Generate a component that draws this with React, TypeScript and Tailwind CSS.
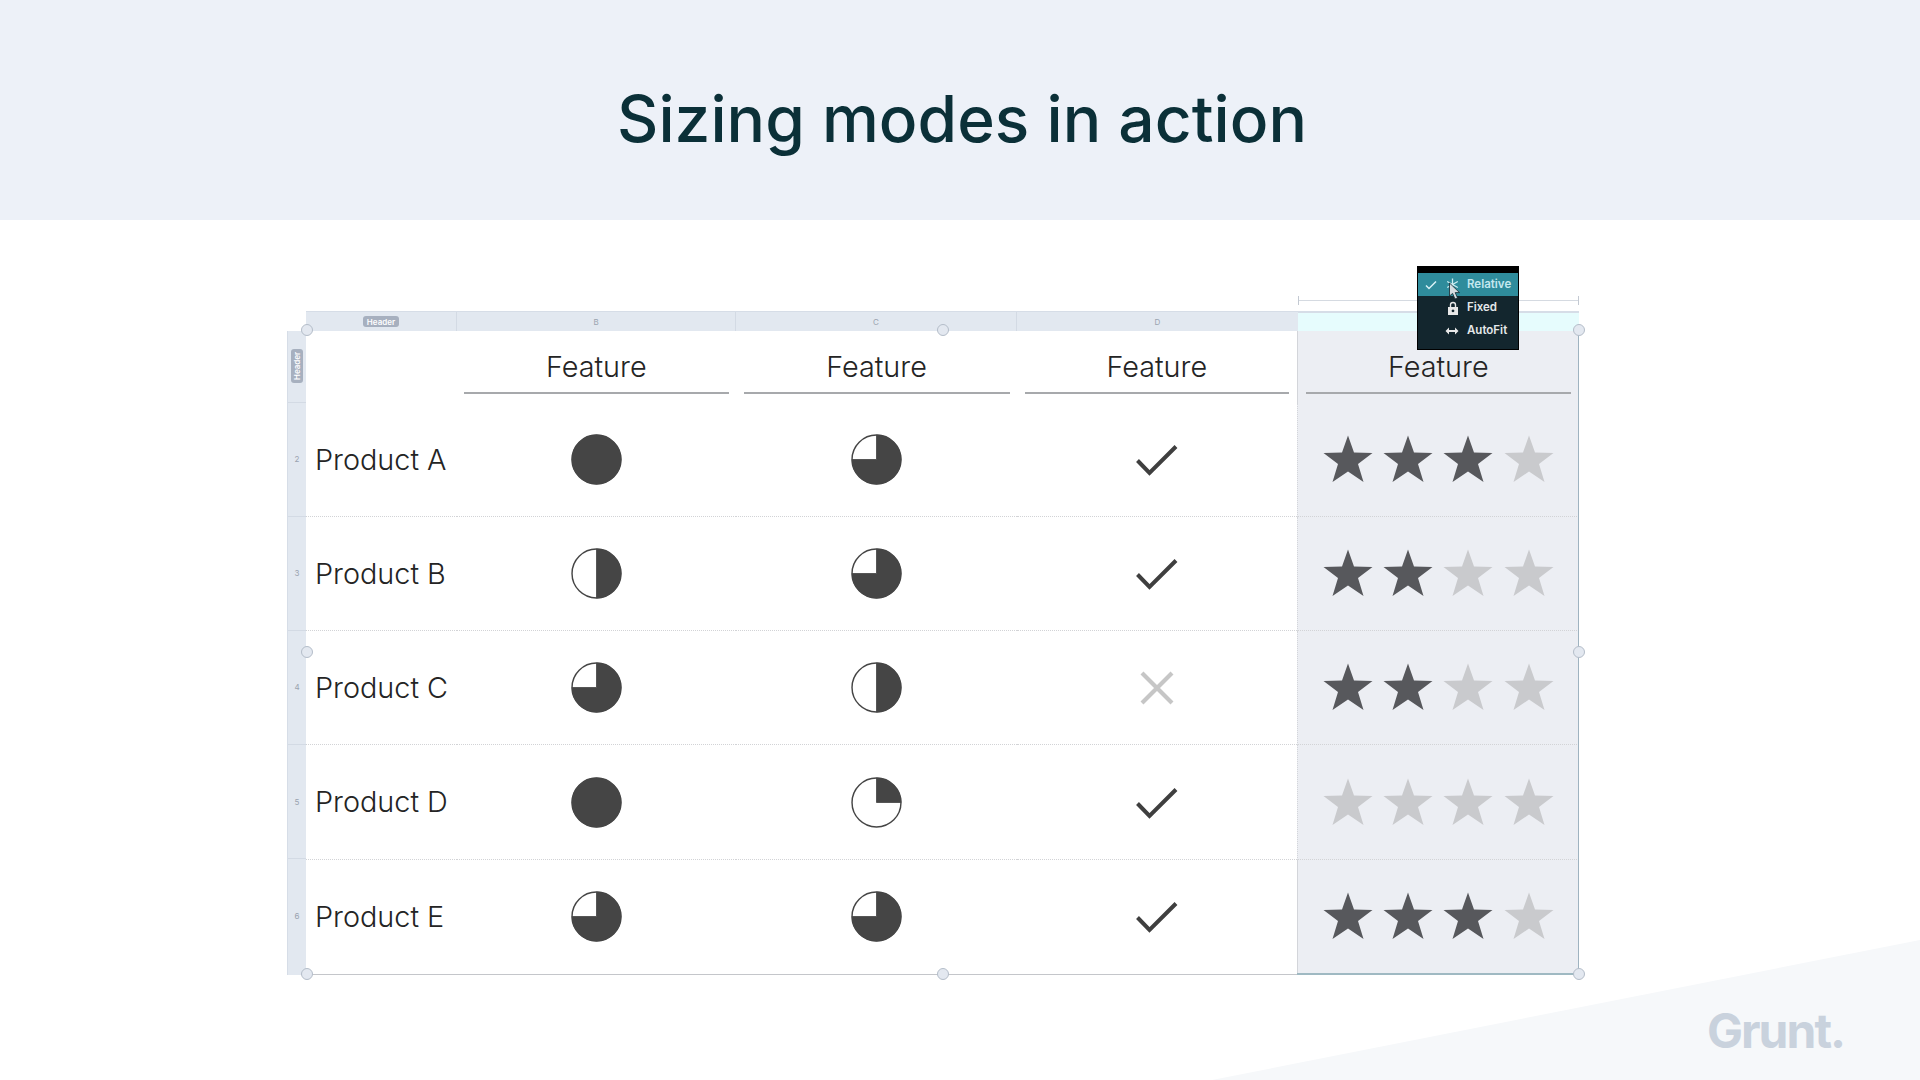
import React from "react";

type Fill = "full" | "three" | "half" | "quarter";
const DARK = "#454545";

function Pie({ kind }: { kind: Fill }) {
  const paths: Record<Fill, string> = {
    full: "M25 1a24 24 0 1 1 0 48a24 24 0 1 1 0-48z",
    three: "M25 1a24 24 0 1 1 -24 24h24z",
    half: "M25 1a24 24 0 0 1 0 48z",
    quarter: "M25 1a24 24 0 0 1 24 24h-24z",
  };
  return (
    <svg width="51" height="51" viewBox="0 0 50 50">
      <circle cx="25" cy="25" r="24" fill="#ffffff" stroke={DARK} strokeWidth="1.4" />
      <path d={paths[kind]} fill={DARK} stroke={DARK} strokeWidth="0.8" />
    </svg>
  );
}

function Check() {
  return (
    <svg width="44" height="34" viewBox="0 0 44 34" fill="none" className="mt-[1px]">
      <path d="M2.5 17.5L14.5 30L41 3.5" stroke="#3f3f3f" strokeWidth="4" />
    </svg>
  );
}

function Cross() {
  return (
    <svg width="36" height="36" viewBox="0 0 36 36" fill="none" className="mt-[1px]">
      <path d="M3 3L33 33M33 3L3 33" stroke="#c6c6c6" strokeWidth="4.2" />
    </svg>
  );
}

function Star({ on }: { on: boolean }) {
  return (
    <svg width="50" height="48" viewBox="0 0 50 48">
      <path
        d="M25 0.5L31 17.5L49.5 18L35 29L40.5 47L25 36.5L9.5 47L15 29L0.5 18L19 17.5z"
        fill={on ? "#57585c" : "#c9cacd"}
      />
    </svg>
  );
}

function Stars({ n }: { n: number }) {
  return (
    <div className="flex items-center gap-[10.4px] -mt-[1px]">
      {[0, 1, 2, 3].map((i) => (
        <Star key={i} on={i < n} />
      ))}
    </div>
  );
}

function Handle({ className }: { className: string }) {
  return (
    <div
      className={
        "absolute w-[12px] h-[12px] -ml-[6px] -mt-[6px] rounded-full bg-[#e3e8f0] border border-[#b4bdc9] " +
        className
      }
    />
  );
}

const rows: { name: string; b: Fill; c: Fill; ok: boolean; stars: number }[] = [
  { name: "Product A", b: "full", c: "three", ok: true, stars: 3 },
  { name: "Product B", b: "half", c: "three", ok: true, stars: 2 },
  { name: "Product C", b: "three", c: "half", ok: false, stars: 2 },
  { name: "Product D", b: "full", c: "quarter", ok: true, stars: 0 },
  { name: "Product E", b: "three", c: "three", ok: true, stars: 3 },
];

const FONT = "font-['Inter','Liberation_Sans',sans-serif]";
const DOT = "border-b border-dotted border-b-[#d2d3d6]";

function Menu() {
  return (
    <div className="absolute left-[1130px] top-[-45px] w-[102px] h-[84px] bg-[#13262e] border border-black border-t-[7px] font-semibold text-[11.5px] leading-none text-[#e4e8ea]">
      <div className="h-[23px] bg-[#2f8c9c] flex items-center text-[#c4e8ef]">
        <svg width="12" height="10" viewBox="0 0 12 10" fill="none" className="ml-[7px]">
          <path d="M1 5.5L4 8.5L11 1.5" stroke="#d9f2f6" strokeWidth="1.5" />
        </svg>
        <svg width="13" height="13" viewBox="0 0 13 13" fill="none" className="ml-[9px]">
          <path d="M6.5 0.5V12.5M1.2 3.5L11.8 9.5M1.2 9.5L11.8 3.5" stroke="#cfeef3" strokeWidth="1.3" />
        </svg>
        <span className="ml-[8px]">Relative</span>
      </div>
      <div className="h-[23px] flex items-center pl-[29px]">
        <svg width="12" height="14" viewBox="0 0 12 14">
          <path d="M3.5 6V4a2.5 2.5 0 0 1 5 0v2" fill="none" stroke="#e8e8e8" strokeWidth="1.4" />
          <path fillRule="evenodd" d="M1 6h10v8H1zM6 8.5a1.4 1.4 0 1 0 0.01 0z" fill="#e8e8e8" />
        </svg>
        <span className="ml-[8px]">Fixed</span>
      </div>
      <div className="h-[23px] flex items-center pl-[27px]">
        <svg width="14" height="8" viewBox="0 0 14 8" fill="none">
          <path d="M3 4H11" stroke="#e8e8e8" strokeWidth="2" />
          <path d="M4 0.5L0.5 4L4 7.5zM10 0.5L13.5 4L10 7.5z" fill="#e8e8e8" />
        </svg>
        <span className="ml-[8px]">AutoFit</span>
      </div>
      <svg width="14" height="19" viewBox="0 0 14 19" className="absolute left-[30px] top-[9px]">
        <path d="M1.5 1L1.5 14L4.6 11.4L7 17L9.5 16L7.2 10.6H11.5z" fill="#d5dde2" stroke="#13262e" strokeWidth="0.8" />
      </svg>
    </div>
  );
}

export default function App() {
  return (
    <div className={"relative w-[1920px] h-[1080px] overflow-hidden bg-white flex flex-col " + FONT}>
      <header className="h-[220px] shrink-0 bg-[#edf1f8] flex items-center justify-center">
        <h1 className="text-[64px] leading-none font-medium text-[#0b3038] mt-[18px] ml-[4px] tracking-[0.05px]">Sizing modes in action</h1>
      </header>

      <main className="relative flex-1">
        <svg className="absolute inset-0" width="1920" height="860" viewBox="0 0 1920 860">
          <path d="M1212 860L1920 720V860z" fill="#f6f8fa" />
        </svg>

        <div className="absolute left-[1298px] top-[76px] w-[281px] h-[9px] border-x border-[#c3c9d2] flex items-center">
          <div className="w-full h-px bg-[#d5dae1]" />
        </div>

        <div className="relative ml-[287px] mt-[91px] w-[1292px]">
          <div className="ml-[19px] h-[20px] flex bg-[#e2e8f0] border-t border-[#d6dde7] text-[8px] text-[#9aa3af] leading-none">
            <div className="w-[151px] flex items-center justify-center border-r border-[#d3dae4]">
              <span className="bg-[#a7b0bf] text-white font-semibold rounded-[3px] px-[4px] py-[1.5px] text-[8px]">Header</span>
            </div>
            <div className="w-[279px] flex items-center justify-center border-r border-[#d3dae4]">B</div>
            <div className="w-[281px] flex items-center justify-center border-r border-[#d3dae4]">C</div>
            <div className="w-[281px] flex items-center justify-center">D</div>
            <div className="flex-1 bg-[#e6fcfd] border-t border-[#d6dde7]" />
          </div>

          <div className="flex">
            <div className="w-[19px] shrink-0 bg-[#e2e8f0] border-l border-[#d6dde7] text-[8px] text-[#9aa3af] leading-none flex flex-col">
              <div className="h-[71.5px] border-b border-[#d3dae4] pt-[18px] flex justify-center">
                <span className="bg-[#a7b0bf] text-white font-semibold rounded-[3px] h-[34px] w-[12px] flex items-center justify-center [writing-mode:vertical-rl] rotate-180 text-[8px]">Header</span>
              </div>
              {[2, 3, 4, 5, 6].map((n) => (
                <div key={n} className="h-[114.2px] flex items-center justify-center border-b border-[#d3dae4] last:border-b-0">
                  {n}
                </div>
              ))}
            </div>

            <div className="flex-1 border-b-[1.5px] border-[#c4c6ca]">
              <div className="grid grid-cols-[150.5px_279.5px_281px_279.5px_282.5px] h-[71.5px] text-[28.8px] font-light text-[#242424]">
                <div />
                {["Feature", "Feature", "Feature"].map((t, i) => (
                  <div key={i} className="px-[7.5px]">
                    <div className="h-[63px] pt-[10px] border-b-2 border-[#a7a9ac] flex items-center justify-center">{t}</div>
                  </div>
                ))}
                <div className="px-[8px] bg-[#eceef3] border-l border-[#d3d5da]">
                  <div className="h-[63px] pt-[10px] border-b-2 border-[#a7a9ac] flex items-center justify-center">Feature</div>
                </div>
              </div>
              {rows.map((r, i) => (
                <div key={r.name} className="grid grid-cols-[150.5px_279.5px_281px_279.5px_282.5px] h-[114.3px] items-stretch">
                  <div className={"flex items-center pl-[9px] text-[28.8px] font-light text-[#242424] " + (i < 4 ? DOT : "")}>
                    {r.name}
                  </div>
                  <div className={"flex items-center justify-center " + (i < 4 ? DOT : "")}>
                    <Pie kind={r.b} />
                  </div>
                  <div className={"flex items-center justify-center " + (i < 4 ? DOT : "")}>
                    <Pie kind={r.c} />
                  </div>
                  <div className={"flex items-center justify-center " + (i < 4 ? DOT : "")}>
                    {r.ok ? <Check /> : <Cross />}
                  </div>
                  <div className={"flex items-center justify-center bg-[#eceef3] border-l border-[#d3d5da] " + (i < 4 ? DOT : "")}>
                    <Stars n={r.stars} />
                  </div>
                </div>
              ))}
            </div>
            <div className="absolute right-0 top-[20px] bottom-0 w-px bg-[#9fb3c0]" />
            <div className="absolute left-[1010px] right-0 bottom-0 h-[1.5px] bg-[#9fb9c2]" />
          </div>

          <Menu />
          <Handle className="left-[20px] top-[19px]" />
          <Handle className="left-[655.5px] top-[19px]" />
          <Handle className="left-[1292px] top-[19px]" />
          <Handle className="left-[20px] top-[341px]" />
          <Handle className="left-[1292px] top-[341px]" />
          <Handle className="left-[20px] top-[663px]" />
          <Handle className="left-[655.5px] top-[663px]" />
          <Handle className="left-[1292px] top-[663px]" />
        </div>

        <div className="absolute right-[76px] bottom-[25px] text-[48px] leading-none font-bold text-[#c9d2dd] tracking-[-2px]">Grunt.</div>
      </main>
    </div>
  );
}
